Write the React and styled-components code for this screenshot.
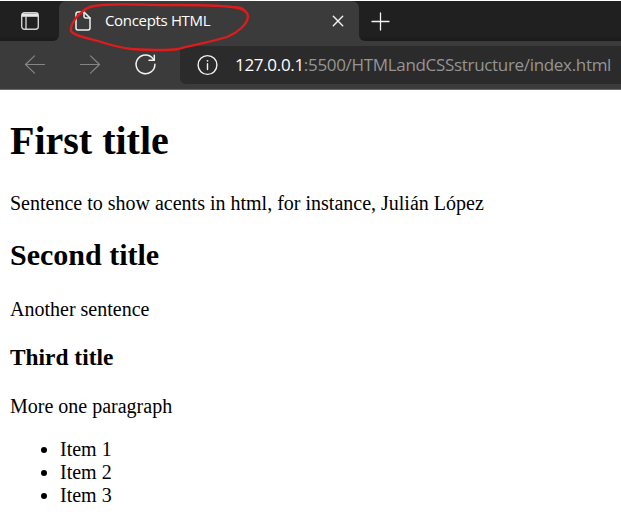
import React from "react";
import styled, { createGlobalStyle } from "styled-components";

const GlobalStyle = createGlobalStyle`
  * { box-sizing: border-box; }
  body { margin: 0; background: #fff; overflow: hidden; }
`;

const Window = styled.div`
  width: 621px;
  height: 517px;
  overflow: hidden;
  background: #fff;
  font-family: "Open Sans", "Noto Sans", sans-serif;
`;

const Chrome = styled.header`
  position: relative;
  height: 90px;
  padding-top: 1px;
  background: #fff;
`;

const TabStrip = styled.div`
  display: flex;
  height: 40px;
  background: #3b3b3b;
`;

const StripSegment = styled.div`
  display: flex;
  align-items: center;
  width: ${(p) => p.$width};
  padding-left: ${(p) => p.$inset}px;
  background: linear-gradient(#202020 34px, #1b1b1b);
  border-radius: ${(p) => p.$radius};
`;

const Tab = styled.div`
  display: flex;
  align-items: center;
  width: 300px;
  height: 40px;
  padding: 0 15px 0 16px;
  background: #3b3b3b;
  border-radius: 7px 7px 0 0;
`;

const TabBackdrop = styled.div`
  background: linear-gradient(#202020 20px, #3b3b3b 20px);
`;

const TabTitle = styled.span`
  flex: 1;
  margin-left: 14px;
  padding-bottom: 2px;
  color: #fff;
  font-size: 15px;
  line-height: 20px;
  letter-spacing: -0.33px;
  white-space: nowrap;
`;

const Toolbar = styled.div`
  display: flex;
  align-items: center;
  height: 49px;
  padding-left: 24px;
  background: #3b3b3b;
  border-bottom: 1px solid #6a6a6a;
`;

const NavButtons = styled.nav`
  display: flex;
  flex: none;
  align-items: center;
  gap: 33px;
  width: 156px;
`;

const AddressBar = styled.div`
  display: flex;
  align-items: center;
  flex: 1;
  min-width: 0;
  height: 38px;
  padding-left: 16px;
  background: #2b2b2b;
  border-radius: 6px 0 0 6px;
`;

const Url = styled.span`
  margin-left: 17px;
  color: #959595;
  font-size: 17px;
  line-height: 24px;
  letter-spacing: -0.32px;
  white-space: nowrap;
`;

const Host = styled.span`
  color: #fff;
`;

const Icon = styled.svg`
  display: block;
  flex: none;
  fill: none;
  stroke: ${(p) => p.$color || "#f2f2f2"};
  stroke-width: ${(p) => p.$weight || 1.4};
  stroke-linecap: round;
  stroke-linejoin: round;
`;

const Annotation = styled.svg`
  position: absolute;
  left: 0;
  top: 0;
  fill: none;
  stroke: #e11b1b;
  stroke-width: 2.3;
  stroke-linecap: round;
  stroke-linejoin: round;
  pointer-events: none;
`;

const Page = styled.main`
  display: flow-root;
  padding: 0 10px;
  color: #000;
  font: 20px "Liberation Serif", "Times New Roman", serif;
  line-height: 23px;
`;

const FirstTitle = styled.h1`
  margin: 28px 0;
  font-size: 40px;
  line-height: 46px;
`;

const SecondTitle = styled.h2`
  margin: 23px 0 27px;
  font-size: 30px;
  line-height: 33px;
`;

const ThirdTitle = styled.h3`
  margin: 23px 0 24px;
  font-size: 23.4px;
  line-height: 27px;
`;

const Paragraph = styled.p`
  margin: 20px 0;
`;

const List = styled.ul`
  margin: 20px 0;
  padding-left: 50px;
`;

export default function App() {
  return (
    <Window>
      <GlobalStyle />
      <Chrome>
        <TabStrip>
          <StripSegment $width="59px" $inset={21} $radius="0 0 6px 0">
            <Icon width="18" height="18" viewBox="0 0 18 18">
              <rect x="0.7" y="0.7" width="16.6" height="16.6" rx="2.7" stroke="#d0d0d0" />
              <path d="M1 1.500h16v3.300H1z" fill="#e8e8e8" stroke="none" />
              <path d="M5 5v12" stroke="#d0d0d0" />
            </Icon>
          </StripSegment>
          <TabBackdrop>
            <Tab>
              <Icon width="16" height="20" viewBox="0 0 16 20" $weight="1.5">
                <path d="M3 1h6l6 6v10a2 2 0 0 1-2 2H3a2 2 0 0 1-2-2V3a2 2 0 0 1 2-2z" />
                <path d="M9 1v4.500A1.500 1.500 0 0 0 10.500 7H15" />
              </Icon>
              <TabTitle>Concepts HTML</TabTitle>
              <Icon width="12" height="12" viewBox="0 0 12 12">
                <path d="M1.300 1.300l9.400 9.400M10.700 1.300L1.300 10.700" />
              </Icon>
            </Tab>
          </TabBackdrop>
          <StripSegment $width="262px" $inset={12} $radius="0 0 0 6px">
            <Icon width="19" height="19" viewBox="0 0 19 19" $weight="1.3">
              <path d="M9.500 1v17M1 9.500h17" />
            </Icon>
          </StripSegment>
        </TabStrip>
        <Toolbar>
          <NavButtons>
            <Icon width="22" height="20" viewBox="0 0 22 20" $color="#858585" $weight="1.2">
              <path d="M20.500 9.500H1.500M10.500 .9L1.500 9.500l9 8.600" />
            </Icon>
            <Icon width="22" height="20" viewBox="0 0 22 20" $color="#858585" $weight="1.2">
              <path d="M1.500 9.500h19M11.500 .9l9 8.600-9 8.600" />
            </Icon>
            <Icon width="23" height="22" viewBox="-1 0 23 22" $weight="1.5">
              <path d="M19.900 10.300A9.400 9.400 0 1 1 18.200 5L19.300 6.300" />
              <path d="M19.300 1.300v5H14" />
            </Icon>
          </NavButtons>
          <AddressBar>
            <Icon width="22" height="22" viewBox="0 0 22 22" $weight="1.4">
              <circle cx="11.500" cy="11" r="9.400" />
              <path d="M11.500 9.800v5.700" />
              <circle cx="11.500" cy="6.800" r=".9" fill="#f2f2f2" stroke="none" />
            </Icon>
            <Url>
              <Host>127.0.0.1</Host>:5500/HTMLandCSSstructure/index.html
            </Url>
          </AddressBar>
        </Toolbar>
        <Annotation width="260" height="60" viewBox="0 0 260 60">
          <path d="M82 12C74 18 70 27 71 31C73 35 83 37 98 41C113 46 121 48 132 49C148 50 165 51 178 49C193 45 211 42 227 37C237 33 247 25 248 17C248 11 242 8 232 7C216 5 197 5 176 5C149 6 113 2 94 6C88 7 84 10 82 12M231 7C239 7 243 8 244 10" />
        </Annotation>
      </Chrome>
      <Page>
        <FirstTitle>First title</FirstTitle>
        <Paragraph>Sentence to show acents in html, for instance, Julián López</Paragraph>
        <SecondTitle>Second title</SecondTitle>
        <Paragraph>Another sentence</Paragraph>
        <ThirdTitle>Third title</ThirdTitle>
        <Paragraph>More one paragraph</Paragraph>
        <List>
          <li>Item 1</li>
          <li>Item 2</li>
          <li>Item 3</li>
        </List>
      </Page>
    </Window>
  );
}
